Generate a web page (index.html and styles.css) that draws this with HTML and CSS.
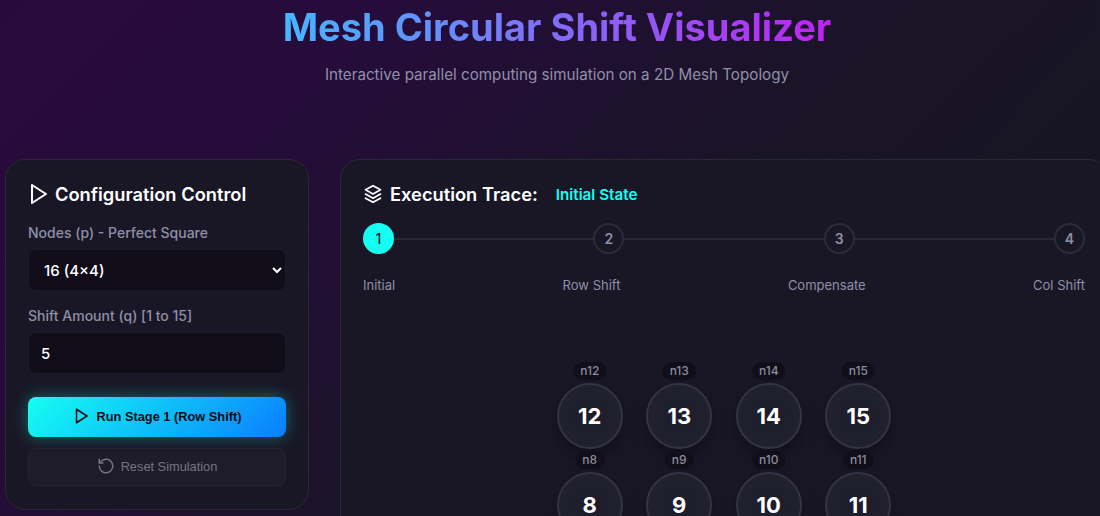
FILE: index.html
```html
<!DOCTYPE html>
<html lang="en">
  <head>
    <meta charset="UTF-8" />
    <meta name="viewport" content="width=device-width, initial-scale=1.0" />
    <title>Mesh Circular Shift Visualizer</title>
    <link rel="stylesheet" href="styles.css">
  </head>
  <body>
    <div class="app">
      <header class="page-head">
        <h1>Mesh Circular Shift Visualizer</h1>
        <p>Interactive parallel computing simulation on a 2D Mesh Topology</p>
      </header>

      <div class="layout">
        <aside class="card controls">
          <h2 class="card-title">
            <svg class="icon icon-play" viewBox="0 0 24 24"><polygon points="6 3 20 12 6 21 6 3" /></svg>
            Configuration Control
          </h2>

          <label class="field-label" for="nodes">Nodes (p) - Perfect Square</label>
          <select id="nodes" class="field">
            <option>16 (4×4)</option>
            <option>9 (3×3)</option>
            <option>25 (5×5)</option>
          </select>

          <label class="field-label" for="shift">Shift Amount (q) [1 to 15]</label>
          <input id="shift" class="field" type="number" value="5" />

          <button class="btn btn-run">
            <svg class="icon icon-small" viewBox="0 0 24 24"><polygon points="6 3 20 12 6 21 6 3" /></svg>
            Run Stage 1 (Row Shift)
          </button>
          <button class="btn btn-reset">
            <svg class="icon icon-small" viewBox="0 0 24 24"><path d="M3 12a9 9 0 1 0 3-6.7L3 8" /><path d="M3 3v5h5" /></svg>
            Reset Simulation
          </button>
        </aside>

        <main class="card trace">
          <div class="trace-head">
            <h2 class="card-title">
              <svg class="icon" viewBox="0 0 24 24"><path d="M12 2 3 7l9 5 9-5-9-5Z" /><path d="m3 12 9 5 9-5" /><path d="m3 17 9 5 9-5" /></svg>
              Execution Trace:
            </h2>
            <span class="stage-name">Initial State</span>
          </div>

          <div class="stepper">
            <span class="step active">1</span>
            <span class="step">2</span>
            <span class="step">3</span>
            <span class="step">4</span>
          </div>
          <div class="step-labels">
            <span>Initial</span>
            <span>Row Shift</span>
            <span>Compensate</span>
            <span>Col Shift</span>
          </div>

          <div class="mesh">
            <div class="node"><span class="node-id">n12</span>12</div>
            <div class="node"><span class="node-id">n13</span>13</div>
            <div class="node"><span class="node-id">n14</span>14</div>
            <div class="node"><span class="node-id">n15</span>15</div>
            <div class="node"><span class="node-id">n8</span>8</div>
            <div class="node"><span class="node-id">n9</span>9</div>
            <div class="node"><span class="node-id">n10</span>10</div>
            <div class="node"><span class="node-id">n11</span>11</div>
          </div>
        </main>
      </div>
    </div>
  </body>
</html>
```

FILE: styles.css
```css
:root {
  --text: #ffffff;
  --muted: #8f8fa8;
  --cyan: #14fff2;
  --card: #191726;
  --line: #2a2936;
  --field: #100d19;
}

html,
body {
  height: 100%;
}

body {
  margin: 0;
  overflow: hidden;
  font-family: "Inter", sans-serif;
  color: var(--text);
  background: linear-gradient(135deg, #2a0a3c 0%, #250c3a 25%, #1a1428 55%, #14161f 100%);
  color-scheme: dark;
}

.app {
  width: 1104px;
  margin-left: 5px;
}

.page-head {
  text-align: center;
  height: 159px;
}

h1 {
  margin: 0;
  padding-top: 3px;
  font-size: 38px;
  line-height: 48px;
  font-weight: 700;
  background: linear-gradient(90deg, #45b6fe 0%, #bc24f0 100%);
  background-clip: text;
  -webkit-background-clip: text;
  color: transparent;
  display: inline-block;
}

.page-head p {
  margin: 13px 0 0;
  font-size: 15.2px;
  line-height: 22px;
  color: var(--muted);
}

.layout {
  display: flex;
  gap: 31px;
  align-items: flex-start;
}

.card {
  box-sizing: border-box;
  background: var(--card);
  border: 1px solid var(--line);
  border-radius: 20px;
  padding: 23px 22px;
}

.controls {
  width: 304px;
  height: 351px;
  flex: none;
}

.trace {
  flex: 1;
  height: 600px;
  padding-right: 23px;
}

.card-title {
  display: flex;
  align-items: center;
  gap: 7px;
  margin: 0;
  font-size: 18.3px;
  line-height: 22px;
  font-weight: 600;
}

.icon {
  width: 20px;
  height: 20px;
  flex: none;
  fill: none;
  stroke: currentColor;
  stroke-width: 2;
  stroke-linecap: round;
  stroke-linejoin: round;
}

.icon-play {
  width: 24px;
  height: 24px;
  margin: -1px -2px;
}

.icon-small {
  width: 18px;
  height: 18px;
}

.controls .card-title {
  margin-bottom: 19px;
}

.field-label {
  display: block;
  margin: 16px 0 7px;
  font-size: 14px;
  line-height: 18px;
  font-weight: 500;
  color: var(--muted);
}

.field {
  display: block;
  box-sizing: border-box;
  width: 100%;
  height: 42px;
  padding: 0 12px;
  font-family: "Inter", sans-serif;
  font-size: 15px;
  font-weight: 500;
  color: var(--text);
  background: var(--field);
  border: 1px solid #1c1a28;
  border-radius: 8px;
}

select.field {
  padding: 0 11px;
}

.btn {
  display: flex;
  align-items: center;
  justify-content: center;
  gap: 6px;
  box-sizing: border-box;
  width: 100%;
  padding: 0 0 2px;
  font-family: "Liberation Sans", sans-serif;
  font-size: 12.8px;
  border-radius: 8px;
}

.btn-run {
  height: 40px;
  margin-top: 23px;
  font-weight: 700;
  color: #0c0c14;
  background: linear-gradient(135deg, #14fff2 0%, #0a7eff 100%);
  border: none;
  box-shadow: 0 0 16px rgba(20, 255, 242, 0.35);
}

.btn-reset {
  height: 38px;
  margin-top: 11px;
  font-weight: 400;
  color: #77747f;
  background: #1e1c2a;
  border: 1px solid #262432;
}

.trace-head {
  display: flex;
  align-items: center;
  gap: 18px;
}

.stage-name {
  font-size: 15.2px;
  font-weight: 600;
  color: var(--cyan);
}

.stepper {
  display: flex;
  justify-content: space-between;
  margin-top: 18px;
  background: linear-gradient(var(--line), var(--line)) center / 100% 2px no-repeat;
}

.step {
  box-sizing: border-box;
  width: 31px;
  height: 31px;
  display: flex;
  align-items: center;
  justify-content: center;
  border-radius: 50%;
  font-size: 14px;
  font-weight: 600;
  color: var(--muted);
  background: var(--card);
  border: 2px solid #2c2b39;
}

.step.active {
  color: #1a1a2a;
  font-weight: 500;
  background: var(--cyan);
  border: none;
}

.step-labels {
  display: flex;
  justify-content: space-between;
  margin-top: 23px;
  font-size: 13px;
  line-height: 16px;
  color: var(--muted);
}

.mesh {
  display: grid;
  grid-template-columns: repeat(4, 66px);
  gap: 23px 23.5px;
  justify-content: center;
  margin-top: 90px;
}

.node {
  position: relative;
  box-sizing: border-box;
  width: 66px;
  height: 66px;
  display: flex;
  align-items: center;
  justify-content: center;
  border-radius: 50%;
  font-size: 22px;
  font-weight: 700;
  background: radial-gradient(circle at center, #1d1c2a 0%, #232230 100%);
  border: 2px solid #343341;
  box-shadow: 0 8px 16px rgba(0, 0, 0, 0.35);
}

.node-id {
  position: absolute;
  top: -23px;
  left: 50%;
  transform: translateX(-50%);
  padding: 2px 7px;
  font-size: 12px;
  line-height: 14px;
  font-weight: 500;
  color: #8b8b9c;
  background: #100e19;
  border-radius: 9px;
}
```
